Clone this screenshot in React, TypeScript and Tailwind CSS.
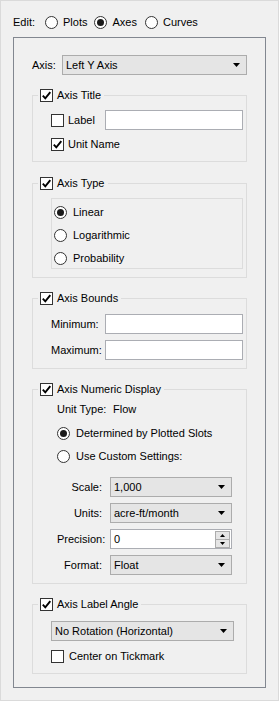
import React from "react";

const Check = ({ checked }: { checked?: boolean }) => (
    <span className="flex h-[13px] w-[13px] shrink-0 items-center justify-center border border-[#333333] bg-white">
        {checked && (
            <svg width="11" height="11" viewBox="0 0 11 11">
                <path d="M1.8 5.6 L4.3 8.3 L9.3 2.2" fill="none" stroke="#000" strokeWidth="1.9" />
            </svg>
        )}
    </span>
);

const Radio = ({ selected }: { selected?: boolean }) => (
    <span className="flex h-[13px] w-[13px] shrink-0 items-center justify-center rounded-full border border-[#333333] bg-white">
        {selected && <span className="h-[7px] w-[7px] rounded-full bg-[#1a1a1a]" />}
    </span>
);

const Arrow = () => (
    <svg width="7" height="4" viewBox="0 0 7 4" className="shrink-0">
        <polygon points="0,0 7,0 3.5,4" fill="#000" />
    </svg>
);

interface selectProps {
    value: string,
    width: string
}
const Select = ({ value, width }: selectProps) => (
    <div className={`flex h-[20px] ${width} shrink-0 items-center justify-between border border-[#acacac] bg-[#e5e5e5] pl-[3px] pr-[6px]`}>
        <span>{value}</span>
        <Arrow />
    </div>
);

const TextBox = () => <div className="h-[20px] w-[138px] shrink-0 border border-[#abadb3] bg-white" />;

const Group = ({ title, className, children }: { title: string, className?: string, children: React.ReactNode }) => (
    <fieldset className={`mx-[18px] min-w-0 border border-[#dcdcdc] pl-[18px] pr-[3px] ${className ?? ""}`}>
        <legend className="-ml-[13px] flex h-[13px] items-center gap-x-[4px] px-[2px]">
            <Check checked />
            <span className="pr-[1px]">{title}</span>
        </legend>
        {children}
    </fieldset>
);

const FieldRow = ({ label, children, className }: { label: string, children: React.ReactNode, className?: string }) => (
    <div className={`flex items-center ${className ?? ""}`}>
        <span className="mr-[8px] w-[45px] shrink-0 text-right">{label}</span>
        {children}
    </div>
);

export default function App() {
    return (
        <div className="flex h-[701px] w-[279px] flex-col border border-[#dadada] bg-[#f0f0f0] font-['Liberation_Sans',Arial,sans-serif] text-[11px] leading-[13px] text-black">
            <div className="ml-[12px] mt-[15px] flex h-[13px] items-center">
                <span>Edit:</span>
                <div className="ml-[10px] flex items-center gap-x-[5px]">
                    <Radio />
                    <span>Plots</span>
                </div>
                <div className="ml-[7px] flex items-center gap-x-[5px]">
                    <Radio selected />
                    <span>Axes</span>
                </div>
                <div className="ml-[8px] flex items-center gap-x-[5px]">
                    <Radio />
                    <span>Curves</span>
                </div>
            </div>

            <div className="mx-[12px] mt-[8px] flex h-[651px] flex-col border border-[#828790]">
                <div className="ml-[18px] mt-[17px] flex items-center">
                    <span className="w-[30px]">Axis:</span>
                    <Select value="Left Y Axis" width="w-[185px]" />
                </div>

                <Group title="Axis Title" className="mt-[14px] pb-[10px]">
                    <div className="mt-[8px] flex h-[20px] items-center">
                        <Check />
                        <span className="ml-[4px] w-[37px]">Label</span>
                        <TextBox />
                    </div>
                    <div className="mt-[8px] flex items-center gap-x-[4px]">
                        <Check checked />
                        <span>Unit Name</span>
                    </div>
                </Group>

                <Group title="Axis Type" className="mt-[15px] pb-[8px]">
                    <div className="mt-[8px] flex flex-col gap-y-[10px] border border-[#dcdcdc] pb-[3px] pl-[2px] pt-[7px]">
                        <div className="flex items-center gap-x-[6px]">
                            <Radio selected />
                            <span>Linear</span>
                        </div>
                        <div className="flex items-center gap-x-[6px]">
                            <Radio />
                            <span>Logarithmic</span>
                        </div>
                        <div className="flex items-center gap-x-[6px]">
                            <Radio />
                            <span>Probability</span>
                        </div>
                    </div>
                </Group>

                <Group title="Axis Bounds" className="mt-[14px] pb-[8px]">
                    <div className="mt-[9px] flex items-center">
                        <span className="w-[54px] shrink-0">Minimum:</span>
                        <TextBox />
                    </div>
                    <div className="mt-[6px] flex items-center">
                        <span className="w-[54px] shrink-0">Maximum:</span>
                        <TextBox />
                    </div>
                </Group>

                <Group title="Axis Numeric Display" className="mt-[14px] pb-[8px]">
                    <div className="ml-[6px] mt-[7px] flex">
                        <span className="w-[56px]">Unit Type:</span>
                        <span>Flow</span>
                    </div>
                    <div className="ml-[6px] mt-[11px] flex items-center gap-x-[6px]">
                        <Radio selected />
                        <span>Determined by Plotted Slots</span>
                    </div>
                    <div className="ml-[6px] mt-[10px] flex items-center gap-x-[6px]">
                        <Radio />
                        <span>Use Custom Settings:</span>
                    </div>
                    <FieldRow label="Scale:" className="ml-[6px] mt-[14px]">
                        <Select value="1,000" width="w-[122px]" />
                    </FieldRow>
                    <FieldRow label="Units:" className="ml-[6px] mt-[6px]">
                        <Select value="acre-ft/month" width="w-[122px]" />
                    </FieldRow>
                    <FieldRow label="Precision:" className="ml-[6px] mt-[6px]">
                        <div className="flex h-[20px] w-[122px] shrink-0 items-center justify-between border border-[#abadb3] bg-white pl-[3px] pr-px">
                            <span>0</span>
                            <div className="flex flex-col">
                                <div className="flex h-[9px] w-[15px] items-center justify-center border border-[#acacac] bg-[#e5e5e5]">
                                    <svg width="5" height="3" viewBox="0 0 5 3"><polygon points="0,3 5,3 2.5,0" fill="#000" /></svg>
                                </div>
                                <div className="-mt-px flex h-[9px] w-[15px] items-center justify-center border border-[#acacac] bg-[#e5e5e5]">
                                    <svg width="5" height="3" viewBox="0 0 5 3"><polygon points="0,0 5,0 2.5,3" fill="#000" /></svg>
                                </div>
                            </div>
                        </div>
                    </FieldRow>
                    <FieldRow label="Format:" className="ml-[6px] mt-[6px]">
                        <Select value="Float" width="w-[122px]" />
                    </FieldRow>
                </Group>

                <Group title="Axis Label Angle" className="mt-[14px] pb-[10px]">
                    <div className="mt-[10px] flex">
                        <Select value="No Rotation (Horizontal)" width="w-[183px]" />
                    </div>
                    <div className="mt-[9px] flex items-center gap-x-[5px]">
                        <Check />
                        <span>Center on Tickmark</span>
                    </div>
                </Group>
            </div>
        </div>
    );
}
